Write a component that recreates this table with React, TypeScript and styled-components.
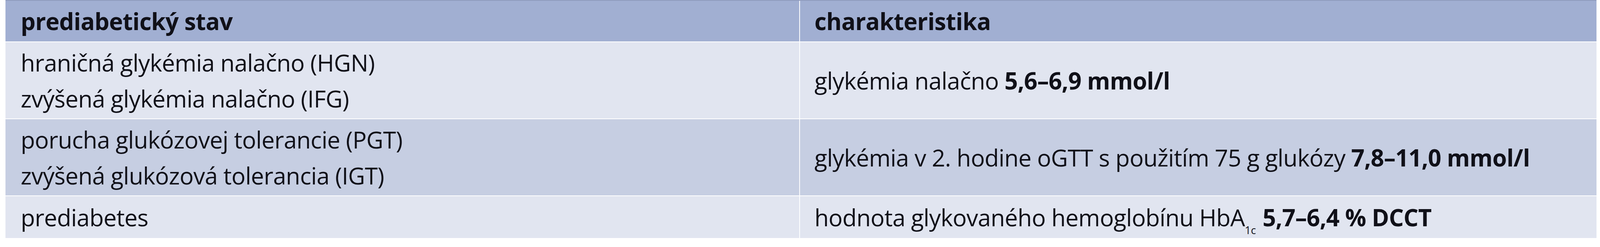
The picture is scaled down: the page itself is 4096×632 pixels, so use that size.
import React from "react";
import styled, { createGlobalStyle } from "styled-components";

const GlobalStyle = createGlobalStyle`
  html, body {
    margin: 0;
    padding: 0;
    background: #ffffff;
  }
  body {
    font-family: "Open Sans", "Noto Sans", "Liberation Sans", sans-serif;
    color: #101018;
  }
`;

const Page = styled.div`
  padding: 0 9px 0 14px;
  width: 4096px;
  box-sizing: border-box;
`;

const Table = styled.div`
  display: grid;
  grid-template-columns: 2032px 1fr;
  grid-template-rows: 104px 195px 195px 107px;
  column-gap: 2px;
  row-gap: 2px;
  border-top: 2px solid #8f9bbd;
  background: #ffffff;
`;

type Tone = "head" | "light" | "dark";

const tones: Record<Tone, string> = {
  head: "#a1afd2",
  light: "#e1e5f0",
  dark: "#c6cee2",
};

const Cell = styled.div<{ $tone: Tone; $col: 1 | 2 }>`
  background: ${(p) => tones[p.$tone]};
  display: flex;
  flex-direction: column;
  justify-content: center;
  padding-left: ${(p) => (p.$col === 1 ? "39px" : "37px")};
  font-size: 60px;
  line-height: 92px;
  letter-spacing: -0.7px;
  font-weight: ${(p) => (p.$tone === "head" ? 700 : 400)};
  white-space: nowrap;
  overflow: hidden;
`;

const Line = styled.div``;

const Strong = styled.b`
  font-weight: 700;
`;

const Sub = styled.span`
  font-size: 27px;
  line-height: 1;
  vertical-align: -20px;
  letter-spacing: 0;
  margin-right: 2px;
`;

export default function App() {
  return (
    <>
      <GlobalStyle />
      <Page>
        <Table>
          <Cell $tone="head" $col={1}>
            <Line>prediabetický stav</Line>
          </Cell>
          <Cell $tone="head" $col={2}>
            <Line>charakteristika</Line>
          </Cell>

          <Cell $tone="light" $col={1}>
            <Line>hraničná glykémia nalačno (HGN)</Line>
            <Line>zvýšená glykémia nalačno (IFG)</Line>
          </Cell>
          <Cell $tone="light" $col={2}>
            <Line>
              glykémia nalačno <Strong>5,6–6,9 mmol/l</Strong>
            </Line>
          </Cell>

          <Cell $tone="dark" $col={1}>
            <Line>porucha glukózovej tolerancie (PGT)</Line>
            <Line>zvýšená glukózová tolerancia (IGT)</Line>
          </Cell>
          <Cell $tone="dark" $col={2}>
            <Line>
              glykémia v 2. hodine oGTT s použitím 75 g glukózy{" "}
              <Strong>7,8–11,0 mmol/l</Strong>
            </Line>
          </Cell>

          <Cell $tone="light" $col={1}>
            <Line>prediabetes</Line>
          </Cell>
          <Cell $tone="light" $col={2}>
            <Line>
              hodnota glykovaného hemoglobínu HbA<Sub>1c</Sub>{" "}
              <Strong>5,7–6,4 % DCCT</Strong>
            </Line>
          </Cell>
        </Table>
      </Page>
    </>
  );
}
